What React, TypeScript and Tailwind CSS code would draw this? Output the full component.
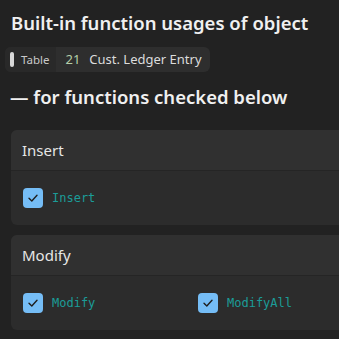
import React from "react";

const sans = { fontFamily: '"Noto Sans", "Open Sans", sans-serif' };
const mono = { fontFamily: '"DejaVu Sans Mono", "Liberation Mono", monospace' };

function Check() {
  return (
    <span className="flex h-5 w-5 shrink-0 items-center justify-center rounded-[4px] bg-[#75bdf6]">
      <svg width="12" height="12" viewBox="0 0 12 12" fill="none">
        <path d="M2 6.2 4.8 9 10 3.2" stroke="#1f1f1f" strokeWidth="1.4" strokeLinecap="round" strokeLinejoin="round" />
      </svg>
    </span>
  );
}

function Section({ title, items }: { title: string; items: string[] }) {
  return (
    <div className="w-[400px] overflow-hidden rounded-md bg-[#2c2c2c]">
      <div className="flex h-10 items-center bg-[#303030] px-[11px] text-[15px] text-[#e6e6e6]">{title}</div>
      <div className="h-[1px] bg-[#252525]" />
      <div className="grid grid-cols-[175px_175px] py-[17px] pl-3">
        {items.map((it) => (
          <div key={it} className="flex items-center gap-[9px]">
            <Check />
            <span className="text-[12px] text-[#1b9c98]" style={mono}>{it}</span>
          </div>
        ))}
      </div>
    </div>
  );
}

export default function App() {
  return (
    <div className="h-[339px] w-[339px] overflow-hidden bg-[#222222] text-white" style={sans}>
      <h1 className="pl-[11px] pt-[8px] text-[18.5px] font-semibold leading-[30px] text-[#f0f0f0]">
        Built-in function usages of object
      </h1>
      <div className="ml-[5px] mt-[9px] flex h-[25px] w-fit items-center overflow-hidden rounded-md bg-[#2e2e2e]">
        <div className="flex h-full items-center gap-[7px] bg-[#292929] pl-[5px] pr-[7px]">
          <span className="h-[15px] w-[4px] rounded-full bg-[#d8d8d8]" />
          <span className="text-[11.5px] text-[#c8c8c8]">Table</span>
        </div>
        <span className="ml-[9px] text-[13px] text-[#b5cea8]">21</span>
        <span className="ml-[9px] pr-[8px] text-[13px] text-[#dcdcdc]">Cust. Ledger Entry</span>
      </div>
      <h2 className="pl-[10px] pt-[10px] text-[18.5px] font-semibold leading-[30px] text-[#f0f0f0]">
        — for functions checked below
      </h2>
      <div className="mt-[18px] flex flex-col gap-[10px] pl-[11px]">
        <Section title="Insert" items={["Insert"]} />
        <Section title="Modify" items={["Modify", "ModifyAll"]} />
      </div>
    </div>
  );
}
